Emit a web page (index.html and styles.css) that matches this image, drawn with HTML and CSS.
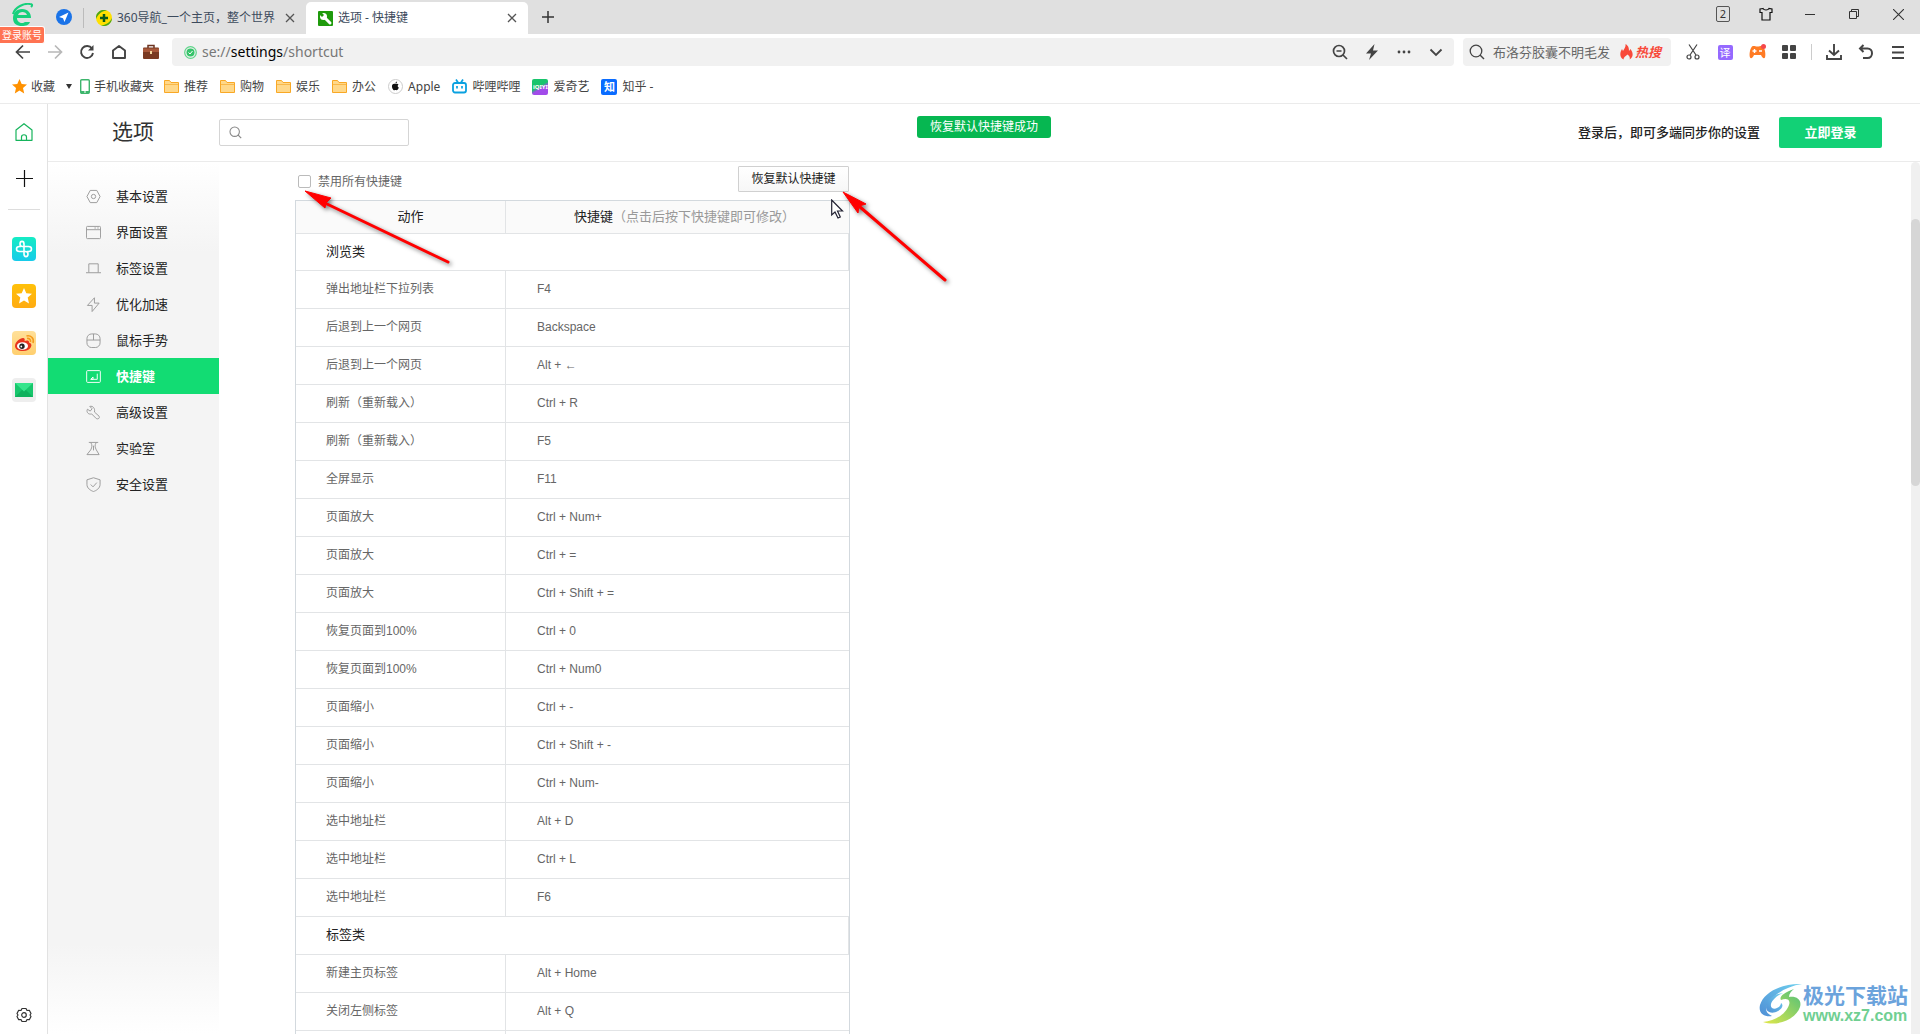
FILE: index.html
```html
<!DOCTYPE html>
<html lang="zh-CN">
<head>
<meta charset="utf-8">
<title>选项 - 快捷键</title>
<link rel="stylesheet" href="styles.css">
</head>
<body>
<svg class="defs" aria-hidden="true">
  <symbol id="folder" viewBox="0 0 15 15"><path d="M.5 13.500V1.500h5l1.500 2h7.500v10z" fill="#ffd88a" stroke="#f9a825"/><path d="M1 5.500h13" stroke="#f9b84a"/></symbol>
  <symbol id="close" viewBox="0 0 10 10"><path d="M1 1l8 8M9 1L1 9" stroke="#555" stroke-width="1.300"/></symbol>
  <symbol id="lens" viewBox="0 0 16 16"><circle cx="7" cy="7" r="5.800" fill="none" stroke="currentColor" stroke-width="1.300"/><path d="M11 11l4 4" stroke="currentColor" stroke-width="1.500"/></symbol>
</svg>

<header class="tabbar">
  <button class="logo" aria-label="账号">
    <svg width="24" height="24" viewBox="0 0 24 24"><path d="M3 15h18c0-5-3-9-9-9s-9 4-9 9c0 6 4 8 9 8 4 0 7-1 8-4h-5c-1 1-5 2-7-1-1-1-1-2-1-3zM8 12c1-4 8-4 9 0z" fill="#18d07c" fill-rule="evenodd"/><path d="M3 11C5 4 14 0 20 1c2 0 3 1 1 3" fill="none" stroke="#18d07c" stroke-width="2"/></svg>
    <span class="badge">登录账号</span>
  </button>
  <button class="nav-dot" aria-label="导航"><svg width="16" height="16" viewBox="0 0 16 16"><circle cx="8" cy="8" r="8" fill="#1a73e8"/><path d="M12.500 3.500L3 8l4 1.200L8.500 13z" fill="#fff"/></svg></button>
  <div class="tab">
    <svg width="16" height="16" viewBox="0 0 16 16"><circle cx="8" cy="8" r="8" fill="#ffe000"/><path d="M0 9A8 8 0 0 1 11 .5C6 1 2 4 0 9zM16 8a8 8 0 0 1-11 7.500c5-.5 9-3 11-7.500z" fill="#4aa51c"/><path d="M8 4v8M4 8h8" stroke="#0a5a1a" stroke-width="2.500"/></svg>
    <span>360导航_一个主页，整个世界</span>
    <button aria-label="关闭"><svg width="10" height="10"><use href="#close"/></svg></button>
  </div>
  <div class="tab active">
    <svg width="15" height="15" viewBox="0 0 15 15"><rect width="15" height="15" rx="1" fill="#1f9a0c"/><path d="M6 6l6 6" stroke="#fff" stroke-width="3" stroke-linecap="round"/><circle cx="5.500" cy="5.500" r="3.500" fill="#fff"/><path d="M1 3l2-2 3 3-2 2z" fill="#1f9a0c"/></svg>
    <span>选项 - 快捷键</span>
    <button aria-label="关闭"><svg width="10" height="10"><use href="#close"/></svg></button>
  </div>
  <button class="newtab" aria-label="新标签"><svg width="14" height="14" viewBox="0 0 14 14"><path d="M7 1v12M1 7h12" stroke="#333" stroke-width="1.500"/></svg></button>
  <div class="winctl">
    <button class="count">2</button>
    <button aria-label="皮肤"><svg width="14" height="14" viewBox="0 0 14 14"><path d="M4 1.500L1 2v3.500h2V13h8V5.500h2V2l-3-.5c-1 2-5 2-6 0z" fill="none" stroke="#111" stroke-width="1.200"/></svg></button>
    <button aria-label="最小化"><svg width="10" height="10"><path d="M0 5.500h10" stroke="#333"/></svg></button>
    <button aria-label="还原"><svg width="10" height="10"><path d="M.5 2.500h7v7h-7zM2.500 2.500v-2h7v7h-2" fill="none" stroke="#333"/></svg></button>
    <button aria-label="关闭窗口"><svg width="11" height="11" viewBox="0 0 10 10"><path d="M0 0l10 10M10 0L0 10" stroke="#333"/></svg></button>
  </div>
</header>

<div class="toolbar">
  <div class="navbtns">
    <button aria-label="后退"><svg width="16" height="16" viewBox="0 0 16 16"><path d="M15 8H2M8 1.500L1.500 8 8 14.500" fill="none" stroke="#444" stroke-width="1.700"/></svg></button>
    <button aria-label="前进"><svg width="16" height="16" viewBox="0 0 16 16"><path d="M1 8h13M8 1.500L14.500 8 8 14.500" fill="none" stroke="#b8b8b8" stroke-width="1.700"/></svg></button>
    <button aria-label="刷新"><svg width="16" height="16" viewBox="0 0 16 16"><path d="M13 4.500A6 6 0 1 0 14 9" fill="none" stroke="#444" stroke-width="1.900"/><path d="M14.500 1v5.500H9z" fill="#444"/></svg></button>
    <button aria-label="主页"><svg width="16" height="16" viewBox="0 0 16 16"><path d="M2 6.500L8 2l6 4.500V14H2z" fill="none" stroke="#444" stroke-width="1.900" stroke-linejoin="round"/></svg></button>
    <button aria-label="工具箱"><svg width="16" height="16" viewBox="0 0 16 16"><path d="M5 4V1.500h6V4" fill="none" stroke="#6b3320" stroke-width="1.500"/><rect y="3.500" width="16" height="11.500" rx="1" fill="#7a3a22"/><path d="M0 4.500h16V8H0z" fill="#a8583a"/><path d="M7 7h2v3H7z" fill="#f5d9a0"/></svg></button>
  </div>
  <div class="omnibox">
    <svg width="13" height="13" viewBox="0 0 13 13"><circle cx="6.500" cy="6.500" r="5.800" fill="none" stroke="#5fd58a" stroke-width="1.200"/><circle cx="6.500" cy="6.500" r="4" fill="#35c46a"/><path d="M4.500 6.500l1.500 1.500 2.500-3" fill="none" stroke="#fff"/></svg>
    <p class="url">se://<b>settings</b>/shortcut</p>
    <button aria-label="缩放"><svg width="16" height="16" viewBox="0 0 16 16"><circle cx="7" cy="7" r="5.500" fill="none" stroke="#444" stroke-width="1.700"/><path d="M4.500 7h5M11 11l4 4" stroke="#444" stroke-width="1.700"/></svg></button>
    <button aria-label="极速模式"><svg width="16" height="16" viewBox="0 0 16 16"><path d="M10.500 0L2 9.500h5L5 16l9-9.500H9z" fill="#444"/></svg></button>
    <button aria-label="更多"><svg width="16" height="16" viewBox="0 0 16 16" fill="#444"><circle cx="3" cy="8" r="1.400"/><circle cx="8" cy="8" r="1.400"/><circle cx="13" cy="8" r="1.400"/></svg></button>
    <button aria-label="展开"><svg width="16" height="16" viewBox="0 0 16 16"><path d="M2.500 5.500L8 11l5.500-5.500" fill="none" stroke="#444" stroke-width="1.800"/></svg></button>
  </div>
  <div class="searchbox">
    <svg width="16" height="16" color="#444"><use href="#lens"/></svg>
    <span>布洛芬胶囊不明毛发</span>
    <svg class="flame" width="13" height="16" viewBox="0 0 13 16"><path d="M3.500 15.500C-1 13 0 8 2 5l1 2C4 5 6 3 5.500 0 9 2 9 5 9 7l1.500-2c3 4 3 8-1 10.500 1-2-.5-4-2-5-2 1.500-4 3-4 5z" fill="#f8493a"/></svg>
    <em>热搜</em>
  </div>
  <div class="exts">
    <button aria-label="截图"><svg width="16" height="16" viewBox="0 0 16 16" fill="none" stroke="#444" stroke-width="1.200"><circle cx="4" cy="13" r="2"/><circle cx="12" cy="13" r="2"/><path d="M5 11L12 .5M11 11L4 .5"/></svg></button>
    <button class="translate"><span>译</span></button>
    <button aria-label="游戏"><svg width="17" height="16" viewBox="0 0 17 16"><path d="M3 2.500c2-1 3 0 5.500 0s3.500-1 5.500 0c2 2 3 8 2 11-1 2-3 0-4-2.500H5C4 13.500 2 15.500 1 13.500c-1-3 0-9 2-11z" fill="#ff7b24"/><path d="M5.500 5v4M3.500 7h4M10 7h3" stroke="#fff" stroke-width="1.400"/><circle cx="14.500" cy="2.500" r="2.500" fill="#f5484c"/></svg></button>
    <button aria-label="扩展"><svg width="16" height="16" viewBox="0 0 16 16" fill="#444"><rect x="1" y="1" width="6" height="6" rx="1"/><rect x="9" y="1" width="6" height="6" rx="1"/><rect x="1" y="9" width="6" height="6" rx="1"/><rect x="9" y="9" width="6" height="6" rx="1"/></svg></button>
    <i class="sep"></i>
    <button aria-label="下载"><svg width="16" height="16" viewBox="0 0 16 16" fill="none" stroke="#444" stroke-width="1.900"><path d="M8 0v11M3 6.500L8 11l5-4.500M1 11v4h14v-4"/></svg></button>
    <button aria-label="恢复"><svg width="16" height="16" viewBox="0 0 16 16" fill="none" stroke="#444" stroke-width="2"><path d="M5.500 1L2 4.500 5.500 8M2 4.500h7.500c6 0 6 9.500 0 9.500H5"/></svg></button>
    <button aria-label="菜单"><svg width="14" height="16" viewBox="0 0 14 16"><path d="M1 3h12M1 8.500h12M1 14h12" stroke="#444" stroke-width="2"/></svg></button>
  </div>
</div>

<nav class="bookmarks">
  <a href="#fav" class="fav"><svg width="15" height="15" viewBox="0 0 15 15"><path d="M7.500 0l2.200 5 5.300.5-4 3.500 1.200 5.500-4.700-3-4.700 3L4 9 0 5.500 5.300 5z" fill="#ff9100"/></svg>收藏<svg class="caret" width="6" height="5"><path d="M0 0h6L3 5z" fill="#333"/></svg></a>
  <a href="#m" class="phone"><svg width="10" height="15" viewBox="0 0 10 15"><rect x=".7" y=".7" width="8.600" height="13.600" rx="1" fill="#fff" stroke="#3db56c" stroke-width="1.400"/><path d="M1 13h8" stroke="#3db56c" stroke-width="2"/><path d="M4 13h2" stroke="#fff"/></svg>手机收藏夹</a>
  <a href="#1"><svg width="15" height="15"><use href="#folder"/></svg>推荐</a>
  <a href="#2"><svg width="15" height="15"><use href="#folder"/></svg>购物</a>
  <a href="#3"><svg width="15" height="15"><use href="#folder"/></svg>娱乐</a>
  <a href="#4"><svg width="15" height="15"><use href="#folder"/></svg>办公</a>
  <a href="#5"><svg width="15" height="15" viewBox="0 0 15 15"><circle cx="7.500" cy="7.500" r="7" fill="#fff" stroke="#ccc"/><path d="M7.500 5c1-.6 2.500-.5 3 .5-1.200.8-1 2.500.3 3-.6 1.800-1.500 3-2.300 2.800-.7-.3-1.200-.3-2 0C5 11.500 3 7.500 4.500 5.500c.8-1 2-.9 3-.5zM7.400 4.600c0-1 .8-1.900 1.700-2 0 1-.7 1.900-1.700 2z" fill="#111"/></svg>Apple</a>
  <a href="#6"><svg width="15" height="15" viewBox="0 0 15 15"><rect x="1" y="4" width="13" height="9.500" rx="2" fill="#fff" stroke="#0aa1e0" stroke-width="1.800"/><path d="M4 .5l2 3M11 .5l-2 3M5 7v2.500M10 7v2.500" stroke="#0aa1e0" stroke-width="1.700"/></svg>哔哩哔哩</a>
  <a href="#7"><span class="mini iqiyi">iQIYI</span>爱奇艺</a>
  <a href="#8"><span class="mini zhihu">知</span>知乎 -</a>
</nav>

<div class="body">
  <aside class="rail">
    <button aria-label="主页"><svg width="18" height="18" viewBox="0 0 18 18" fill="none" stroke="#16b45c" stroke-width="1.200"><path d="M1 7l8-6.300L17 7v10.300H1z" stroke-linejoin="round"/><path d="M6.500 17v-3c0-3 5-3 5 0v3"/></svg></button>
    <button aria-label="添加"><svg width="18" height="18" viewBox="0 0 18 18"><path d="M9.500 0v17M1 8.500h17" stroke="#111" stroke-width="1.200"/></svg></button>
    <hr>
    <button class="cyan" aria-label="健康"><svg width="24" height="24" viewBox="0 0 24 24"><path d="M12 14V7c0-3.500-4-3.500-4 0 0 1.500 1 2.500 2.500 2.500H16.500c4 0 4 5 0 5H15M12 10v7c0 3.500 4 3.500 4 0 0-1.500-1-2.500-2.500-2.500H7.500c-4 0-4-5 0-5H9" transform="translate(0 0)" fill="none" stroke="#fff" stroke-width="1.600"/></svg></button>
    <button class="gold" aria-label="收藏"><svg width="24" height="24" viewBox="0 0 24 24"><path d="M12 4l2.300 5.300 5.700.5-4.300 3.800L17 19.500l-5-3-5 3 1.300-5.900L4 9.800l5.700-.5z" fill="#fff"/></svg></button>
    <button class="weibo" aria-label="微博"><svg width="24" height="24" viewBox="0 0 24 24"><path d="M3 15c0-4 5-8 8-8 2 0 2 2 1.500 3 2-1 5-1 4.500 1.500 5 1.500 2 8.500-6 8.500-5 0-8-2-8-5z" fill="#e8351e"/><ellipse cx="10.500" cy="15" rx="5.500" ry="3.800" fill="#fff"/><circle cx="10" cy="15.300" r="2.700" fill="#222"/><circle cx="9.300" cy="15.500" r=".9" fill="#fff"/><path d="M15 7.500c2-.5 4 1 3.500 3.500M14.500 5c4-1 8 2 6.500 7" fill="none" stroke="#f59a1b" stroke-width="1.600"/></svg></button>
    <button class="mail" aria-label="邮箱"><svg width="24" height="24" viewBox="0 0 24 24"><path d="M3 5h18v14H3z" fill="#17c66c"/><path d="M3 19l7-7h4l7 7z" fill="#0fb15d"/><path d="M3 5h18l-9 8.500z" fill="#35e58c"/></svg></button>
    <button class="gear" aria-label="设置"><svg width="16" height="16" viewBox="0 0 16 16" fill="none" stroke="#333" stroke-width="1.200"><path d="M6 1.500h4l1 2 2.300-.2L15 6.500 14 8l1 1.500-1.700 3.200-2.300-.2-1 2H6l-1-2-2.300.2L1 9.500 2 8 1 6.500l1.700-3.200 2.300.2z" stroke-linejoin="round"/><circle cx="8" cy="8" r="2.300"/></svg></button>
  </aside>

  <div class="page">
    <div class="pagehead">
      <h1>选项</h1>
      <label class="find"><svg width="13" height="13" color="#888"><use href="#lens"/></svg><input type="text" aria-label="搜索设置"></label>
      <p>登录后，即可多端同步你的设置</p>
      <button class="login">立即登录</button>
      <output class="toast">恢复默认快捷键成功</output>
    </div>
    <div class="split">
      <nav class="menu">
        <a href="#a"><svg viewBox="0 0 16 16"><path d="M4.500 1.500h7L15 8l-3.500 6.500h-7L1 8z"/><circle cx="8" cy="8" r="2.300"/></svg>基本设置</a>
        <a href="#b"><svg viewBox="0 0 16 16"><rect x=".5" y="1.500" width="15" height="13" rx="1"/><path d="M.5 5h15M9 3.200h1.500M12 3.200h1.500"/></svg>界面设置</a>
        <a href="#c"><svg viewBox="0 0 16 16"><path d="M0 12.500h3v-9.500h10v9.500h3M3 12.500h10"/></svg>标签设置</a>
        <a href="#d"><svg viewBox="0 0 16 16"><path d="M9 .8L1.500 9h5v6.500L14 6.500H9z"/></svg>优化加速</a>
        <a href="#e"><svg viewBox="0 0 16 16"><rect x="1" y="1" width="14" height="14.500" rx="5"/><path d="M1 7.500h14M8 1v6.500"/></svg>鼠标手势</a>
        <a href="#f" class="on"><svg viewBox="0 0 16 16"><rect x=".7" y="1.700" width="14.600" height="12.600" rx="1"/><path d="M12 5v6H5.500M7.500 8.500L5 11h2.500z"/></svg>快捷键</a>
        <a href="#g"><svg viewBox="0 0 16 16"><path d="M4 1.500l2.500 2.500-2 2.500L1.500 4.500C0 8 3 10.500 6 9.500l5 5c2 1 4-.5 3-2.500l-5-4.500C10 4 7.500 .5 4 1.500z"/></svg>高级设置</a>
        <a href="#h"><svg viewBox="0 0 16 16"><path d="M3 1.500h10M5 1.500c2 3 1.500 5 0 8l-4 5h13l-3-5c-1.500-3-2-5 0-8M8 5v5"/></svg>实验室</a>
        <a href="#i"><svg viewBox="0 0 16 16"><path d="M8 .8l7 2.200v5c0 4-4 6.500-7 7.500-3-1-7-3.500-7-7.500V3z"/><path d="M5 8l2.500 2.500L11.500 6"/></svg>安全设置</a>
      </nav>
      <main>
        <div class="actions">
          <label><input type="checkbox">禁用所有快捷键</label>
          <button>恢复默认快捷键</button>
        </div>
        <table>
          <thead><tr><th>动作</th><th>快捷键<small>（点击后按下快捷键即可修改）</small></th></tr></thead>
          <tbody>
            <tr class="cat first"><td colspan="2">浏览类</td></tr>
            <tr><td>弹出地址栏下拉列表</td><td>F4</td></tr>
            <tr><td>后退到上一个网页</td><td>Backspace</td></tr>
            <tr><td>后退到上一个网页</td><td>Alt + ←</td></tr>
            <tr><td>刷新（重新载入）</td><td>Ctrl + R</td></tr>
            <tr><td>刷新（重新载入）</td><td>F5</td></tr>
            <tr><td>全屏显示</td><td>F11</td></tr>
            <tr><td>页面放大</td><td>Ctrl + Num+</td></tr>
            <tr><td>页面放大</td><td>Ctrl + =</td></tr>
            <tr><td>页面放大</td><td>Ctrl + Shift + =</td></tr>
            <tr><td>恢复页面到100%</td><td>Ctrl + 0</td></tr>
            <tr><td>恢复页面到100%</td><td>Ctrl + Num0</td></tr>
            <tr><td>页面缩小</td><td>Ctrl + -</td></tr>
            <tr><td>页面缩小</td><td>Ctrl + Shift + -</td></tr>
            <tr><td>页面缩小</td><td>Ctrl + Num-</td></tr>
            <tr><td>选中地址栏</td><td>Alt + D</td></tr>
            <tr><td>选中地址栏</td><td>Ctrl + L</td></tr>
            <tr><td>选中地址栏</td><td>F6</td></tr>
            <tr class="cat"><td colspan="2">标签类</td></tr>
            <tr><td>新建主页标签</td><td>Alt + Home</td></tr>
            <tr><td>关闭左侧标签</td><td>Alt + Q</td></tr>
            <tr><td></td><td></td></tr>
          </tbody>
        </table>
        <svg class="mark mark-a" width="156" height="84" viewBox="0 0 156 84"><path d="M143 71L22 13" stroke="red" stroke-width="3" stroke-linecap="round"/><path d="M0 0l26 7-5 5-1 5z" fill="red" stroke="red"/></svg>
        <svg class="mark mark-b" width="116" height="100" viewBox="0 0 116 100"><path d="M102 88L17 15" stroke="red" stroke-width="3" stroke-linecap="round"/><path d="M0 0l23 12-7 2-1 7z" fill="red" stroke="red"/></svg>
        <svg class="cursor" width="13" height="20" viewBox="0 0 13 20"><path d="M.7 1v15l3.300-3 3 6 2.300-1-2.800-6H11.500z" fill="#fff" stroke="#223" stroke-width="1.200"/></svg>
      </main>
      <div class="scroll"><div class="thumb"></div></div>
    </div>
  </div>
</div>

<div class="watermark">
  <svg width="44" height="42" viewBox="0 0 44 42">
    <defs><linearGradient id="wb" x1="0" y1="1" x2="1" y2="0"><stop offset="0" stop-color="#4f8fd6"/><stop offset="1" stop-color="#6fd0ee"/></linearGradient><linearGradient id="wg" x1="0" y1="1" x2="1" y2="0"><stop offset="0" stop-color="#e2e84a"/><stop offset="1" stop-color="#4fbf7a"/></linearGradient></defs>
    <path d="M43 1C25 0 5 8 1 22c-2 9 5 12 12 11-7-3-8-9-2-15C18 9 30 3 43 1z" fill="url(#wb)"/>
    <path d="M24 10c-9 1-17 7-17 14 0 6 7 7 12 4 4-2 6-6 3-8 0 4-6 7-9 5-4-4 3-12 11-15z" fill="url(#wb)"/>
    <path d="M35 6C24 10 20 14 22 17c5-2 10-1 8 5-3 9-14 16-26 17 15 5 33-3 37-15 2-7-3-11-11-10 0-3 2-6 5-8z" fill="url(#wg)"/>
  </svg>
  <div><strong>极光下载站</strong><span>www.xz7.com</span></div>
</div>
</body>
</html>
```

FILE: styles.css
```css
* { box-sizing: border-box; }
html { height: 100%; overflow: hidden; }
body {
  margin: 0;
  height: 100%;
  overflow: hidden;
  display: flex;
  flex-direction: column;
  background: #fff;
  color: #333;
  font: 12px/18px "Noto Sans", "Noto Sans CJK SC", sans-serif;
}
button {
  display: flex;
  align-items: center;
  justify-content: center;
  border: 0;
  padding: 0;
  background: none;
  color: inherit;
  font: inherit;
}
a { color: inherit; text-decoration: none; }
p, h1 { margin: 0; }
svg { flex: none; display: block; }
.defs { position: absolute; width: 0; height: 0; }

/* window tabs */
.tabbar { display: flex; height: 34px; background: #e0e0e0; flex: none; }
.logo { position: relative; width: 44px; align-items: flex-start; padding-top: 3px; }
.badge {
  position: absolute;
  z-index: 2;
  left: 0;
  top: 26px;
  width: 45px;
  border: 1px solid #fff;
  border-left: 0;
  border-radius: 0 3px 3px 0;
  background: #ff7352;
  color: #fff;
  font-size: 10px;
  line-height: 16px;
  white-space: nowrap;
}
.nav-dot { width: 40px; }
.tab {
  display: flex;
  align-items: center;
  width: 222px;
  gap: 5px;
  padding: 0 11px 0 12px;
  margin-top: 2px;
  font-size: 12px;
  color: #3c4a5c;
}
.tab:not(.active)::before { content: ""; width: 1px; height: 20px; background: #bbb; margin-right: 7px; margin-left: -13px; }
.tab span { flex: 1; white-space: nowrap; }
.tab.active { background: #fff; border-radius: 5px 5px 0 0; }
.newtab { width: 40px; }
.winctl { margin-left: auto; display: flex; align-items: center; padding-bottom: 6px; }
.winctl button { width: 44px; height: 28px; }
.winctl .count { width: 14px; height: 16px; margin: 0 14px; border: 1px solid #555; border-radius: 2px; font-size: 11px; line-height: 14px; }

/* address row */
.toolbar { display: flex; align-items: center; height: 36px; flex: none; }
.navbtns { display: flex; width: 172px; padding-left: 7px; }
.navbtns button { width: 32px; }
.omnibox { flex: 1; display: flex; align-items: center; height: 28px; margin-right: 9px; padding: 0 2px 0 12px; background: #f1f1f1; border-radius: 4px; }
.omnibox button { width: 32px; }
.url { flex: 1; padding-left: 5px; font-size: 14px; color: #777; }
.url b { font-weight: 400; color: #000; }
.searchbox { display: flex; align-items: center; width: 208px; height: 28px; padding-left: 6px; background: #f1f1f1; border-radius: 4px; color: #666; font-size: 13px; white-space: nowrap; }
.searchbox span { padding: 0 10px 0 8px; }
.searchbox em { padding-left: 2px; font-weight: 700; color: #f8493a; }
.exts { display: flex; align-items: center; padding: 0 6px; }
.exts button { width: 32px; }
.translate span { width: 15px; height: 15px; border-radius: 2px; background: #9569ff; color: #fff; font-size: 11px; line-height: 15px; }
.sep { width: 1px; height: 16px; margin: 0 6px; background: #ccc; }

/* bookmarks */
.bookmarks { display: flex; align-items: center; gap: 12px; height: 34px; flex: none; padding: 0 12px; border-bottom: 1px solid #ebebeb; color: #444; }
.bookmarks a { display: flex; align-items: center; gap: 5px; white-space: nowrap; }
.bookmarks .fav { gap: 4px; margin-right: -4px; }
.caret { margin-left: 7px; }
.bookmarks .phone { gap: 4px; margin-right: -2px; }
.mini { width: 16px; height: 16px; border-radius: 2px; color: #fff; text-align: center; overflow: hidden; }
.iqiyi { background: linear-gradient(150deg, #18c46c 45%, #a24bea 60%); font-size: 6px; line-height: 16px; font-weight: 700; }
.zhihu { background: #0a6cff; font-size: 11px; line-height: 16px; font-weight: 700; }

/* left rail */
.body { flex: 1; min-height: 0; display: flex; overflow: hidden; }
.rail { width: 48px; flex: none; display: flex; flex-direction: column; align-items: center; gap: 23px; padding-top: 16px; border-right: 1px solid #e2e2e2; }
.rail button { width: 24px; height: 24px; border-radius: 4px; }
.rail hr { width: 32px; height: 1px; margin: -5px 0 4px; border: 0; background: #ddd; }
.rail .cyan { background: linear-gradient(#15ecc4, #17cbea); }
.rail .gold { background: linear-gradient(#ffc10a, #ffab12); }
.rail .weibo { background: linear-gradient(#ffe09a, #ffcf6e); }
.rail .mail { background: #eee; }
.rail .gear { margin: auto 0 7px; }

/* settings page */
.page { flex: 1; min-width: 0; display: flex; flex-direction: column; }
.pagehead { position: relative; display: flex; align-items: center; height: 58px; flex: none; padding: 0 38px 0 64px; border-bottom: 1px solid #ebebeb; }
.pagehead h1 { width: 107px; font-size: 21px; line-height: 28px; font-weight: 400; padding-bottom: 4px; }
.find { display: flex; align-items: center; width: 190px; height: 27px; padding-left: 9px; border: 1px solid #d5d5d5; border-radius: 2px; }
.find input { flex: 1; min-width: 0; border: 0; outline: 0; background: none; }
.pagehead p { margin-left: auto; padding: 0 19px 2px 0; font-size: 13px; font-weight: 500; color: #222; }
.login { width: 103px; height: 31px; padding-bottom: 2px; border-radius: 2px; background: #12d176; color: #fff; font-size: 13px; font-weight: 700; }
.toast { position: absolute; left: 869px; top: 12px; width: 134px; height: 22px; border-radius: 3px; background: #06b751; color: #fff; line-height: 22px; text-align: center; }
.split { flex: 1; min-height: 0; display: flex; }
.menu { width: 171px; flex: none; padding-top: 16px; background: linear-gradient(#fff, #f4f4f4 90px, #f4f4f4 calc(100% - 90px), #fff); font-size: 13px; color: #222; }
.menu a { display: flex; align-items: center; gap: 15px; height: 36px; padding-left: 38px; }
.menu svg { width: 15px; height: 15px; fill: none; stroke: #999; }
.menu .on { background: #12dc73; color: #fff; font-weight: 700; }
.menu .on svg { stroke: #fff; }

main { position: relative; flex: 1; min-width: 0; overflow: hidden; padding: 4px 0 0 76px; }
.actions { display: flex; justify-content: space-between; width: 554px; height: 34px; padding-left: 3px; }
.actions label { display: flex; align-items: center; gap: 7px; color: #666; padding-bottom: 3px; }
.actions input { appearance: none; width: 13px; height: 13px; margin: 0; border: 1px solid #bbb; border-radius: 2px; background: #fff; }
.actions button { width: 111px; height: 26px; border: 1px solid #d0d0d0; border-radius: 1px; background: linear-gradient(#fff, #f7f7f7); color: #222; }
table { width: 555px; table-layout: fixed; border: 1px solid #d3d9de; border-bottom: 0; border-spacing: 0; font-family: "Liberation Sans", "Noto Sans CJK SC", sans-serif; color: #666; }
th, td { height: 38px; padding: 0 0 1px 31px; border-bottom: 1px solid #e2e4e6; text-align: left; line-height: 18px; }
td:first-child { padding-left: 30px; }
th { height: 33px; padding: 0 0 0 14px; background: #fafafa; color: #222; font-size: 13px; font-weight: 400; text-align: center; }
th:first-child { width: 210px; padding-left: 20px; }
th small { font-size: 13px; color: #999; }
th:first-child, td:first-child { border-right: 1px solid #e2e4e6; }
.cat td { color: #222; font-size: 13px; }
.first td { height: 37px; }
.mark, .cursor { position: absolute; }
.mark { overflow: visible; fill: none; filter: drop-shadow(2px 2px 2px rgba(0, 0, 0, .5)); }
.mark-a { left: 86px; top: 29px; }
.mark-b { left: 624px; top: 30px; }
.cursor { left: 612px; top: 37px; }
.scroll { width: 9px; flex: none; background: #f0f0f0; border-radius: 5px 5px 0 0; padding-top: 57px; }
.thumb { height: 267px; border-radius: 5px; background: #d6d6d6; }

.watermark { position: absolute; right: 12px; bottom: 9px; display: flex; align-items: center; }
.watermark strong { display: block; font-size: 21px; line-height: 24px; color: #6ba3dc; }
.watermark span { display: block; font: 700 16px/18px "Liberation Sans", sans-serif; color: #70cf92; }
```
